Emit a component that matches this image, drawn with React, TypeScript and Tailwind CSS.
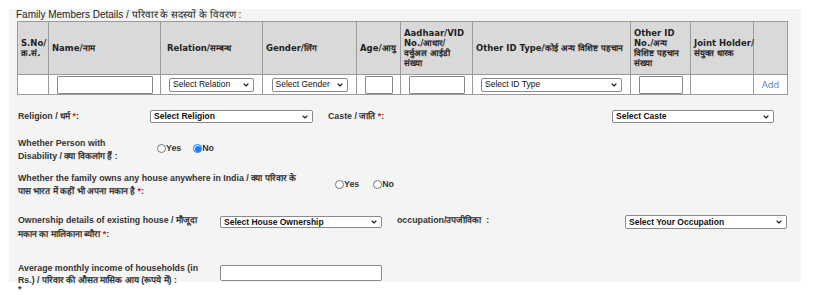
import { ChevronDown } from "lucide-react";

type SelProps = { label: string; className: string; bold?: boolean };

function FakeSelect({ label, className, bold = true }: SelProps) {
  return (
    <div
      className={`flex items-center justify-between bg-white border border-[#8a8a8a] rounded-[2px] pl-[3px] pr-[3px] text-[8.5px] leading-none text-[#111] ${bold ? "font-bold" : ""} ${className}`}
    >
      <span className="whitespace-nowrap">{label}</span>
      <ChevronDown size={8} strokeWidth={3.5} className="text-[#222] shrink-0" />
    </div>
  );
}

function Radio({ checked, label }: { checked?: boolean; label: string }) {
  return (
    <label className="flex items-center">
      {checked ? (
        <span className="w-[9px] h-[9px] rounded-full border border-[#0075ff] bg-white flex items-center justify-center">
          <span className="w-[6px] h-[6px] rounded-full bg-[#1a7cf5]"></span>
        </span>
      ) : (
        <span className="w-[9px] h-[9px] rounded-full border border-[#767676] bg-white"></span>
      )}
      <span className="text-[8.8px] font-bold text-[#333] leading-none">{label}</span>
    </label>
  );
}

const Star = () => <span className="text-[#e01010]">*</span>;

export default function App() {
  const th = "border border-[#9a9a9a] bg-[#d9d9d9] text-left align-middle px-[3px] font-bold";
  const td = "border border-[#9a9a9a] bg-white text-center align-middle p-0";
  const input = "inline-block bg-white border border-[#8a8a8a] rounded-[1px] align-middle";

  return (
    <div className="w-[828px] h-[295px] bg-white pt-[9px] pl-[9px] font-['Liberation_Sans',Arial,sans-serif]">
      <div className="w-[792px] h-[273px] bg-[#f4f4f4] pl-[8px]">
        {/* Family members table */}
        <div className="-ml-[1px] text-[10px] leading-[12px] text-[#222]">
          Family Members Details / परिवार के सदस्यों के विवरण :
        </div>
        <table className="border-collapse table-fixed w-[770px] font-['DejaVu_Sans',Verdana,sans-serif] text-[8.5px] leading-[10px] text-[#222]">
          <colgroup>
            <col className="w-[31px]" />
            <col className="w-[112px]" />
            <col className="w-[102px]" />
            <col className="w-[94px]" />
            <col className="w-[44px]" />
            <col className="w-[72px]" />
            <col className="w-[158px]" />
            <col className="w-[60px]" />
            <col className="w-[63px]" />
            <col className="w-[34px]" />
          </colgroup>
          <thead>
            <tr className="h-[53px]">
              <th className={`${th} px-[1px]`}>
                S.No/
                <br />
                क्र.सं.
              </th>
              <th className={th}>Name/नाम</th>
              <th className={`${th} pl-[6px]`}>Relation/सम्बन्ध</th>
              <th className={th}>Gender/लिंग</th>
              <th className={`${th} px-[2px]`}>Age/आयु</th>
              <th className={`${th} whitespace-nowrap`}>
                Aadhaar/VID
                <br />
                No./आधार/
                <br />
                वर्चुअल आईडी
                <br />
                संख्या
              </th>
              <th className={`${th} whitespace-nowrap`}>Other ID Type/कोई अन्य विशिष्ट पहचान</th>
              <th className={`${th} whitespace-nowrap`}>
                Other ID
                <br />
                No./अन्य
                <br />
                विशिष्ट पहचान
                <br />
                संख्या
              </th>
              <th className={`${th} whitespace-nowrap`}>
                Joint Holder/
                <br />
                संयुक्त धारक
              </th>
              <th className={th}></th>
            </tr>
          </thead>
          <tbody>
            <tr className="h-[20px]">
              <td className={td}></td>
              <td className={td}>
                <span className={`${input} w-[96px] h-[18px]`}></span>
              </td>
              <td className={td}>
                <div className="flex justify-center">
                  <FakeSelect label="Select Relation" bold={false} className="w-[85px] h-[14px] font-['Liberation_Sans',Arial,sans-serif]" />
                </div>
              </td>
              <td className={td}>
                <div className="flex justify-center">
                  <FakeSelect label="Select Gender" bold={false} className="w-[76px] h-[14px] font-['Liberation_Sans',Arial,sans-serif]" />
                </div>
              </td>
              <td className={td}>
                <span className={`${input} w-[28px] h-[18px]`}></span>
              </td>
              <td className={td}>
                <span className={`${input} w-[56px] h-[18px]`}></span>
              </td>
              <td className={td}>
                <div className="flex justify-center">
                  <FakeSelect label="Select ID Type" bold={false} className="w-[141px] h-[14px] font-['Liberation_Sans',Arial,sans-serif]" />
                </div>
              </td>
              <td className={td}>
                <span className={`${input} w-[44px] h-[18px]`}></span>
              </td>
              <td className={td}></td>
              <td className={`${td} text-[9px] text-[#5b82bd]`}>Add</td>
            </tr>
          </tbody>
        </table>

        {/* Form rows */}
        <div className="pl-[1px] text-[8.8px] font-bold text-[#333]">
          <div className="mt-[15px] flex items-center h-[13px]">
            <div className="w-[132px]">
              Religion / धर्म <Star />:
            </div>
            <FakeSelect label="Select Religion" className="w-[163px] h-[13px]" />
            <div className="ml-[15px] w-[284px]">
              Caste / जाति <Star />:
            </div>
            <FakeSelect label="Select Caste" className="w-[162px] h-[13px]" />
          </div>

          <div className="mt-[14px] flex items-center leading-[13px]">
            <div className="w-[139px]">
              Whether Person with
              <br />
              Disability / क्या विकलांग हैं :
            </div>
            <div className="flex items-center gap-[12px] -mt-[3px]">
              <Radio label="Yes" />
              <Radio label="No" checked />
            </div>
          </div>

          <div className="mt-[9px] flex items-center leading-[13px]">
            <div className="w-[317px]">
              Whether the family owns any house anywhere in India / क्या परिवार के
              <br />
              पास भारत में कहीं भी अपना मकान है <Star />:
            </div>
            <div className="flex items-center gap-[14px] -mt-[1px]">
              <Radio label="Yes" />
              <Radio label="No" />
            </div>
          </div>

          <div className="mt-[15px] flex items-start leading-[14px]">
            <div className="w-[202px]">
              Ownership details of existing house / मौजूदा
              <br />
              मकान का मालिकाना ब्यौरा <Star />:
            </div>
            <FakeSelect label="Select House Ownership" className="mt-[3px] w-[162px] h-[12px]" />
            <div className="ml-[15px] w-[228px]">occupation/उपजीविका&nbsp; :</div>
            <FakeSelect label="Select Your Occupation" className="mt-[2px] w-[162px] h-[14px]" />
          </div>

          <div className="mt-[21px] flex items-start leading-[12px]">
            <div className="w-[202px]">
              Average monthly income of households (in
              <br />
              Rs.) / परिवार की औसत मासिक आय (रूपये में) :
              <div className="leading-[7px] text-[#333]">*</div>
            </div>
            <span className="mt-[3px] w-[162px] h-[16px] bg-white border border-[#8a8a8a] rounded-[2px]"></span>
          </div>
        </div>
      </div>
    </div>
  );
}
